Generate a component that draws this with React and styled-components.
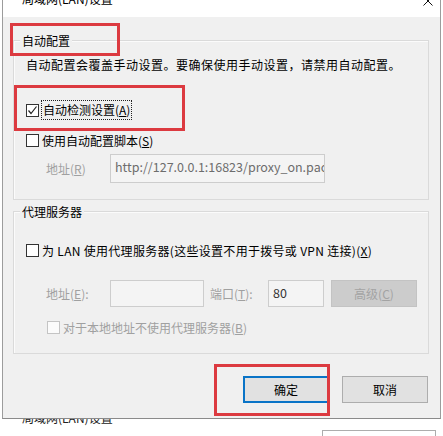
import React from "react";
import styled, { createGlobalStyle } from "styled-components";

const GlobalStyle = createGlobalStyle`
  html, body {
    margin: 0;
    padding: 0;
    background: #fff;
  }
  body {
    font-family: "Noto Sans CJK SC", "Noto Sans", sans-serif;
    font-size: 12px;
    color: #000;
  }
`;

const Page = styled.div`
  position: relative;
  width: 443px;
  height: 436px;
  overflow: hidden;
  background: #fff;
`;

const Window = styled.div`
  margin-left: 2px;
  width: 437px;
  border-left: 1px solid #9c9c9c;
  border-right: 1px solid #9c9c9c;
  border-bottom: 1px solid #8a8a8a;
`;

const TitleBar = styled.div`
  height: 17px;
  background: #fff;
  overflow: hidden;
  display: flex;
  justify-content: space-between;
  align-items: flex-start;
  padding: 0 7px 0 19px;
`;

const TitleText = styled.span`
  margin-top: -9px;
  line-height: 16px;
  color: #000;
`;

const CloseIcon = styled.svg`
  margin-top: -4px;
`;

const Body = styled.div`
  background: #f0f0f0;
  padding: 23px 11px 15px 10px;
`;

const Group = styled.div`
  border: 1px solid #dadada;
  box-shadow: inset 1px 1px 0 #fbfbfb;
  padding: 0 12px ${(p) => p.$padBottom}px;
  margin-top: ${(p) => p.$top || 0}px;
`;

const Legend = styled.div`
  width: fit-content;
  margin: -8px 0 0 -6px;
  padding: 0 2px;
  line-height: 16px;
  background: #f0f0f0;
`;

const Text = styled.div`
  line-height: 16px;
  margin-top: ${(p) => p.$top || 0}px;
  letter-spacing: 0.5px;
  color: ${(p) => (p.$disabled ? "#a0a0a0" : "#000")};
`;

const CheckRow = styled.div`
  display: flex;
  align-items: center;
  gap: 3px;
  height: 18px;
  margin-top: ${(p) => p.$top || 0}px;
  margin-left: ${(p) => p.$indent || 0}px;
  letter-spacing: ${(p) => p.$spacing || 0}px;
  color: ${(p) => (p.$disabled ? "#a0a0a0" : "#000")};
  white-space: nowrap;
`;

const Box = styled.span`
  box-sizing: border-box;
  width: 13px;
  height: 13px;
  flex: none;
  border: 1px solid ${(p) => (p.$disabled ? "#c4c4c4" : "#333")};
  background: ${(p) => (p.$disabled ? "#fbfbfb" : "#fff")};
  display: flex;
  align-items: center;
  justify-content: center;
`;

const Focus = styled.span`
  outline: 1px dotted #222;
  outline-offset: 0;
  padding: 1px 1px;
  line-height: 16px;
`;

const FieldRow = styled.div`
  display: flex;
  align-items: center;
  margin-top: ${(p) => p.$top || 0}px;
  padding-left: 20px;
`;

const FieldLabel = styled.span`
  width: ${(p) => p.$w}px;
  flex: none;
  color: #a0a0a0;
  line-height: 16px;
  margin-left: ${(p) => p.$gap || 0}px;
`;

const Input = styled.div`
  box-sizing: border-box;
  width: ${(p) => p.$w}px;
  height: ${(p) => p.$h}px;
  flex: none;
  border: 1px solid #cdcdcd;
  background: #f4f4f4;
  padding: 3px 4px 0;
  color: ${(p) => p.$color || "#6d6d6d"};
  font-size: 12.5px;
  line-height: 18px;
  white-space: nowrap;
  overflow: hidden;
`;

const Button = styled.div`
  box-sizing: border-box;
  width: 86px;
  height: 27px;
  flex: none;
  display: flex;
  align-items: center;
  justify-content: center;
  background: ${(p) => (p.$disabled ? "#cccccc" : "#e1e1e1")};
  border: ${(p) => (p.$primary ? "2px solid #0a74c7" : p.$disabled ? "1px solid #c3c3c3" : "1px solid #adadad")};
  color: ${(p) => (p.$disabled ? "#a3a3a3" : "#000")};
  margin-left: ${(p) => p.$gap || 0}px;
`;

const ButtonRow = styled.div`
  display: flex;
  justify-content: flex-end;
  gap: 13px;
  margin-top: 22px;
  padding-right: 1px;
`;

const Footer = styled.div`
  height: 17px;
  overflow: hidden;
  display: flex;
  justify-content: space-between;
  align-items: flex-start;
  padding: 0 7px 0 22px;
`;

const FooterTitle = styled.span`
  margin-top: -9px;
  line-height: 16px;
  color: #222;
`;

const FooterButton = styled.div`
  box-sizing: border-box;
  margin-top: 11px;
  width: 114px;
  height: 20px;
  border: 1px solid #adadad;
  background: #fff;
`;

const Mark = styled.div`
  position: absolute;
  box-sizing: border-box;
  border: 3px solid #dc3a40;
  left: ${(p) => p.$x}px;
  top: ${(p) => p.$y}px;
  width: ${(p) => p.$w}px;
  height: ${(p) => p.$h}px;
  pointer-events: none;
`;

const Check = ({ checked, disabled }) => (
  <Box $disabled={disabled}>
    {checked && (
      <svg width="11" height="11" viewBox="0 0 11 11">
        <polyline points="1.5,5.5 4,8.5 9.5,1.5" fill="none" stroke="#222" strokeWidth="1.2" />
      </svg>
    )}
  </Box>
);

export default function App() {
  return (
    <Page>
      <GlobalStyle />
      <Window>
        <TitleBar>
          <TitleText>局域网(LAN)设置</TitleText>
          <CloseIcon width="10" height="10" viewBox="0 0 10 10">
            <path d="M0.5 0.5 L9.5 9.5 M9.5 0.5 L0.5 9.5" stroke="#111" strokeWidth="1" />
          </CloseIcon>
        </TitleBar>
        <Body>
          <Group $padBottom={16}>
            <Legend>自动配置</Legend>
            <Text $top={8}>自动配置会覆盖手动设置。要确保使用手动设置，请禁用自动配置。</Text>
            <CheckRow $top={28}>
              <Check checked />
              <Focus>
                自动检测设置(<u>A</u>)
              </Focus>
            </CheckRow>
            <CheckRow $top={12}>
              <Check />
              <span>
                使用自动配置脚本(<u>S</u>)
              </span>
            </CheckRow>
            <FieldRow $top={5}>
              <FieldLabel $w={64}>
                地址(<u>R</u>)
              </FieldLabel>
              <Input $w={215} $h={29}>
                http://127.0.0.1:16823/proxy_on.pac
              </Input>
            </FieldRow>
          </Group>

          <Group $top={11} $padBottom={17}>
            <Legend>代理服务器</Legend>
            <CheckRow $top={21} $spacing={0.3}>
              <Check />
              <span>
                为 LAN 使用代理服务器(这些设置不用于拨号或 VPN 连接)(<u>X</u>)
              </span>
            </CheckRow>
            <FieldRow $top={21}>
              <FieldLabel $w={64}>
                地址(<u>E</u>):
              </FieldLabel>
              <Input $w={94} $h={27} />
              <FieldLabel $w={58} $gap={6}>
                端口(<u>T</u>):
              </FieldLabel>
              <Input $w={56} $h={27} $color="#333">
                80
              </Input>
              <Button $disabled $gap={7}>
                高级(<u>C</u>)
              </Button>
            </FieldRow>
            <CheckRow $top={11} $indent={21} $disabled>
              <Check disabled />
              <span>
                对于本地地址不使用代理服务器(<u>B</u>)
              </span>
            </CheckRow>
          </Group>

          <ButtonRow>
            <Button $primary>确定</Button>
            <Button>取消</Button>
          </ButtonRow>
        </Body>
      </Window>
      <Footer>
        <FooterTitle>局域网(LAN)设置</FooterTitle>
        <FooterButton />
      </Footer>

      <Mark $x={10} $y={23} $w={110} $h={33} />
      <Mark $x={14} $y={85} $w={171} $h={46} />
      <Mark $x={214} $y={364} $w={116} $h={52} />
    </Page>
  );
}
